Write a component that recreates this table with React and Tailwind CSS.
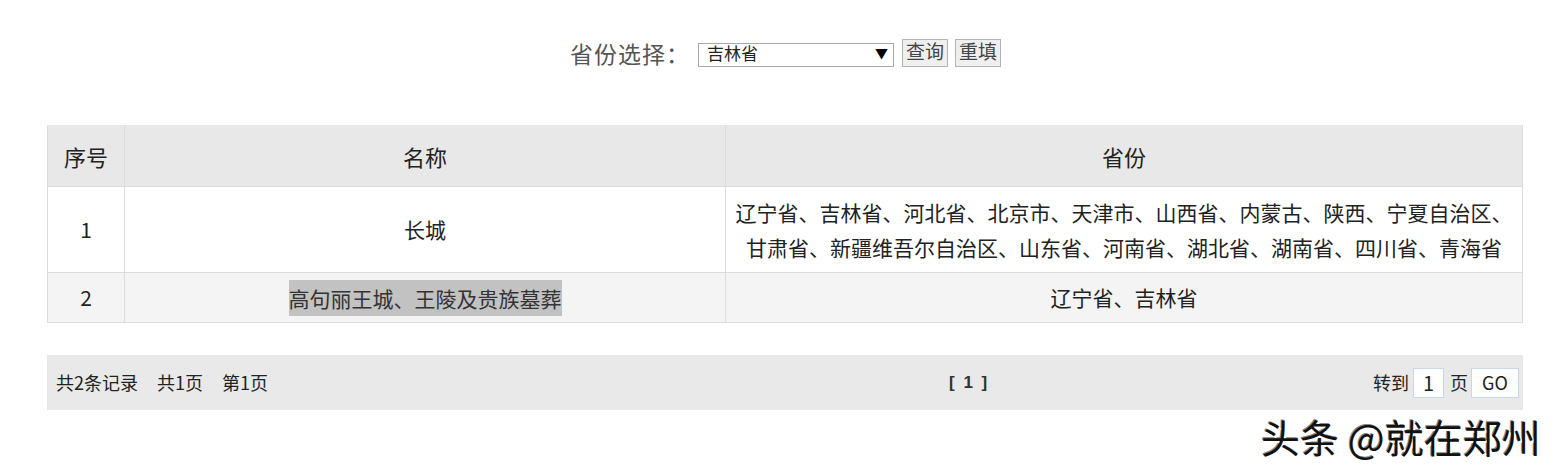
const cjk = { fontFamily: '"Microsoft YaHei", "Noto Sans CJK SC", "Liberation Sans", sans-serif' };
const serif = { fontFamily: '"Liberation Serif", "Noto Sans CJK SC", serif' };

const rows = [
  {
    no: 1,
    name: '长城',
    provinces: ['辽宁省、吉林省、河北省、北京市、天津市、山西省、内蒙古、陕西、宁夏自治区、', '甘肃省、新疆维吾尔自治区、山东省、河南省、湖北省、湖南省、四川省、青海省'],
  },
  { no: 2, name: '高句丽王城、王陵及贵族墓葬', provinces: ['辽宁省、吉林省'], highlight: true },
];

const App = () => {
  return (
    <div className="relative w-[1562px] h-[471px] bg-white text-[#222] overflow-hidden" style={cjk}>
      {/* Search bar */}
      <div className="flex items-center justify-center pt-[39px] pl-[9px]">
        <span className="text-[23px] tracking-[1px] text-[#555] leading-[28px]">省份选择：</span>
        <div className="relative ml-[8px] w-[196px] h-[24px]">
          <select
            defaultValue="吉林省"
            className="appearance-none w-full h-full border border-[#a9a9a9] bg-white pl-[8px] text-[17px] leading-[22px] text-[#222] outline-none"
            style={serif}
          >
            <option>吉林省</option>
          </select>
          <span className="absolute right-[6px] top-[3px] text-[13px] leading-[18px] text-black pointer-events-none">▼</span>
        </div>
        <button className="ml-[8px] w-[46px] h-[28px] border border-[#b4b4b4] bg-[#efefef] text-[19px] leading-[24px] text-[#444]" style={serif}>查询</button>
        <button className="ml-[7px] w-[46px] h-[28px] border border-[#b4b4b4] bg-[#efefef] text-[19px] leading-[24px] text-[#444]" style={serif}>重填</button>
      </div>

      {/* Table */}
      <table className="ml-[47px] mt-[58px] w-[1476px] border-collapse text-center">
        <thead>
          <tr className="bg-[#e8e8e8] h-[61px] text-[22px]">
            <th className="w-[77px] font-normal border border-[#dcdcdc] border-t-[#e8e8e8]">序号</th>
            <th className="w-[601px] font-normal border border-[#dcdcdc] border-t-[#e8e8e8]">名称</th>
            <th className="font-normal border border-[#dcdcdc] border-t-[#e8e8e8]">省份</th>
          </tr>
        </thead>
        <tbody className="text-[21px] leading-[35px]">
          {rows.map((r) => (
            <tr key={r.no} className={r.no % 2 === 0 ? 'bg-[#f4f4f4]' : 'bg-white'}>
              <td className={`border border-[#dcdcdc] ${r.no === 1 ? 'h-[86px]' : 'h-[50px]'}`}>{r.no}</td>
              <td className="border border-[#dcdcdc]">
                {r.highlight ? (
                  <span className="inline-block bg-[#c2c2c2] text-[#333] leading-[36px]">{r.name}</span>
                ) : (
                  r.name
                )}
              </td>
              <td className="border border-[#dcdcdc] px-[8px] py-[7px]">
                {r.provinces.map((line) => (
                  <div key={line}>{line}</div>
                ))}
              </td>
            </tr>
          ))}
        </tbody>
      </table>

      {/* Pagination */}
      <div className="ml-[47px] mt-[32px] w-[1476px] h-[55px] bg-[#e9e9e9] flex items-center text-[18px] text-[#222]">
        <div className="w-[902px] pl-[9px] flex gap-[19px]">
          <span>共2条记录</span>
          <span>共1页</span>
          <span>第1页</span>
        </div>
        <div className="font-bold text-[17px] text-[#333] tracking-[2px]" style={{ fontFamily: '"Liberation Sans", sans-serif' }}>[ 1 ]</div>
        <div className="flex-1 flex justify-end items-center pr-[4px]">
          <span>转到</span>
          <span className="ml-[4px] w-[31px] h-[30px] border border-[#c5d7ee] bg-white flex items-center justify-center text-[20px]">1</span>
          <span className="ml-[6px]">页</span>
          <span className="ml-[3px] w-[48px] h-[30px] border border-[#c5d7ee] bg-white flex items-center justify-center text-[18px]">GO</span>
        </div>
      </div>

      {/* Watermark */}
      <div
        className="absolute left-[1261px] top-[409px] text-[39px] leading-[54px] text-[#111] whitespace-nowrap"
        style={{ textShadow: '2px 2px 0 #fff, -1px -1px 0 #888' }}
      >
        头条 @就在郑州
      </div>
    </div>
  );
};

export default App;
